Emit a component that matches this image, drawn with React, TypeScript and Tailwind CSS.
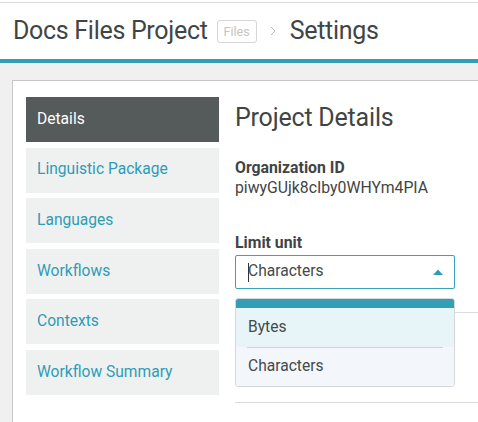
import React from "react";

const navItems = [
  "Details",
  "Linguistic Package",
  "Languages",
  "Workflows",
  "Contexts",
  "Workflow Summary",
];

export default function App() {
  return (
    <div className="h-[422px] w-[478px] overflow-hidden bg-white font-['Roboto',sans-serif] text-[#444a4a]">
      {/* Header */}
      <div className="mt-[2px] flex h-[57px] items-center border-t border-[#dddddd] pl-[13px]">
        <span className="text-[25px] tracking-[-0.3px] text-[#3f4545]">Docs Files Project</span>
        <span className="ml-[9px] rounded-[3px] border border-[#d6d6d6] px-[6px] text-[12.5px] leading-[21px] text-[#c4c4c4]">
          Files
        </span>
        <svg className="ml-[13px]" width="6" height="10" viewBox="0 0 6 10">
          <path d="M1 1 L5 5 L1 9" fill="none" stroke="#bdbdbd" strokeWidth="1" />
        </svg>
        <span className="ml-[14px] text-[25px] tracking-[-0.3px] text-[#3f4545]">Settings</span>
      </div>
      <div className="h-[4px] bg-[#339fb7]" />

      {/* Body */}
      <div className="h-full bg-[#f0f0f0] pl-[12px] pt-[17px]">
        <div className="flex h-full border-l border-t border-[#c4c8c8] bg-white pl-[13px] pt-[16px]">
          {/* Sidebar */}
          <div className="flex w-[193px] shrink-0 flex-col gap-[5.6px]">
            {navItems.map((item, i) => (
              <div
                key={item}
                className={
                  i === 0
                    ? "flex h-[45px] items-center bg-[#555a5a] pl-[11px] text-[15.6px] text-white"
                    : "flex h-[45px] items-center bg-[#eff1f1] pl-[11px] text-[15.6px] text-[#2e9cb6]"
                }
              >
                {item}
              </div>
            ))}
          </div>

          {/* Content */}
          <div className="flex-1 pl-[16px]">
            <h1 className="mt-[5.5px] text-[25px] leading-[30px] tracking-[-0.2px] text-[#3f4545]">Project Details</h1>

            <div className="mt-[25.5px] text-[15.8px] font-bold leading-[20px] text-[#3f4545]">Organization ID</div>
            <div className="text-[15.8px] leading-[20px] text-[#3f4545]">piwyGUjk8cIby0WHYm4PIA</div>

            <div className="mt-[34.5px] text-[15.8px] font-bold leading-[20px] text-[#3f4545]">Limit unit</div>

            <div className="relative mt-[2.5px] w-[220px]">
              <div className="flex h-[34px] items-center rounded-[2px] border border-[#3aa1b9] pl-[12px] pr-[11px]">
                <span className="mr-[-1px] h-[19px] w-[1px] bg-[#333]" />
                <span className="flex-1 text-[15.6px] text-[#444a4a]">Characters</span>
                <svg width="10" height="6" viewBox="0 0 10 6">
                  <path d="M0 6 L5 0.5 L10 6 Z" fill="#2e9cb6" />
                </svg>
              </div>

              {/* Dropdown menu */}
              <div className="absolute left-0 top-[43px] z-10 w-[220px] overflow-hidden rounded-[3px] border border-[#d4d8dc] bg-white">
                <div className="h-[9px] bg-[#339fb7]" />
                <div className="flex h-[39px] items-center bg-[#e8f5f8] pl-[12px] text-[15.6px] text-[#444a4a]">Bytes</div>
                <div className="bg-[#f3f7fc] px-[11px]">
                  <div className="h-[1px] bg-[#cfd4d8]" />
                </div>
                <div className="flex h-[38px] items-center bg-[#f3f7fc] pl-[12px] text-[15.6px] text-[#444a4a]">Characters</div>
              </div>
            </div>

            <div className="mt-[23px] h-[1px] bg-[#dddddd]" />
            <div className="mt-[89px] h-[1px] bg-[#dddddd]" />
          </div>
        </div>
      </div>
    </div>
  );
}
